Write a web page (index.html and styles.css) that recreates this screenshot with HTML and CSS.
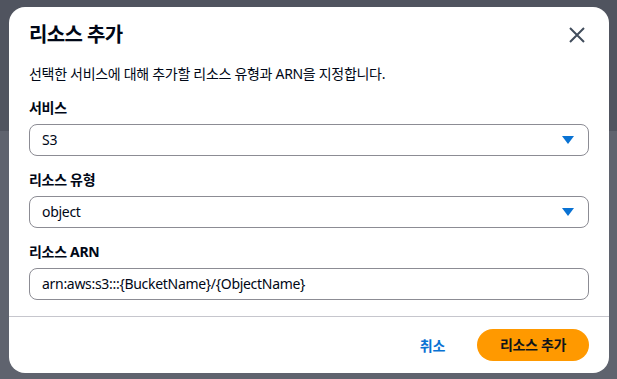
FILE: index.html
```html
<!DOCTYPE html>
<html lang="ko">
<head>
    <meta charset="UTF-8">
    <meta name="viewport" content="width=device-width, initial-scale=1.0">
    <title>리소스 추가</title>
    <link rel="stylesheet" href="styles.css">
</head>
<body>
    <div class="modal">
        <div class="modal-head">
            <h2>리소스 추가</h2>
            <a href="javascript:;" class="close">
                <svg width="16" height="16" viewBox="0 0 16 16"><path d="M1 1L15 15M15 1L1 15" stroke="#414d5c" stroke-width="2" fill="none"/></svg>
            </a>
        </div>
        <div class="modal-body">
            <p class="desc">선택한 서비스에 대해 추가할 리소스 유형과 ARN을 지정합니다.</p>
            <div class="field">
                <label>서비스</label>
                <div class="select">
                    <span>S3</span>
                    <i class="caret"></i>
                </div>
            </div>
            <div class="field">
                <label>리소스 유형</label>
                <div class="select">
                    <span>object</span>
                    <i class="caret"></i>
                </div>
            </div>
            <div class="field">
                <label>리소스 ARN</label>
                <div class="input">arn:aws:s3:::{BucketName}/{ObjectName}</div>
            </div>
        </div>
        <div class="modal-foot">
            <a href="javascript:;" class="btn-link">취소</a>
            <a href="javascript:;" class="btn-primary">리소스 추가</a>
        </div>
    </div>
</body>
</html>
```

FILE: styles.css
```css
*{
    margin: 0;
    padding: 0;
    box-sizing: border-box;
    text-decoration: none;
}
body{
    font-family: "Noto Sans", "Noto Sans CJK KR", sans-serif;
    color: #000716;
    letter-spacing: -0.3px;
    background: linear-gradient(#50545f 0, #50545f 131px, #5f636e 131px);
    height: 379px;
    padding: 7px 0 0 9px;
}
.modal{
    width: 600px;
    height: 366px;
    background-color: #fff;
    border-radius: 16px;
    display: flex;
    flex-direction: column;
}
.modal-head{
    display: flex;
    justify-content: space-between;
    align-items: center;
    padding: 14px 24px 0 20px;
}
.modal-head h2{
    font-size: 20px;
    font-weight: 700;
    line-height: 28px;
    letter-spacing: -0.6px;
}
.close{
    display: block;
    width: 16px;
    height: 16px;
}
.close svg{
    display: block;
}
.modal-body{
    padding: 14px 20px 0 20px;
}
.desc{
    font-size: 14px;
    line-height: 22px;
    color: #000716;
    margin-bottom: 12px;
}
.field{
    margin-bottom: 13px;
}
.field:last-child{
    margin-bottom: 0;
}
.field label{
    display: block;
    font-size: 14px;
    font-weight: 700;
    line-height: 22px;
    margin-bottom: 5px;
}
.select, .input{
    height: 32px;
    border: 1px solid #8c8c94;
    border-radius: 8px;
    padding: 0 12px;
    font-size: 14px;
    line-height: 30px;
    display: flex;
    justify-content: space-between;
    align-items: center;
}
.caret{
    width: 0;
    height: 0;
    border-left: 6px solid transparent;
    border-right: 6px solid transparent;
    border-top: 8px solid #0972d3;
    margin-right: 2px;
}
.modal-foot{
    margin-top: 16px;
    border-top: 1px solid #c6c6cd;
    flex: 1;
    display: flex;
    justify-content: flex-end;
    align-items: center;
    padding: 0 20px 0 0;
    gap: 32px;
}
.btn-link{
    font-size: 14px;
    font-weight: 700;
    color: #0972d3;
}
.btn-primary{
    display: block;
    width: 112px;
    height: 32px;
    line-height: 32px;
    text-align: center;
    border-radius: 16px;
    background-color: #ff9900;
    color: #0f141a;
    font-size: 14px;
    font-weight: 700;
}
```
